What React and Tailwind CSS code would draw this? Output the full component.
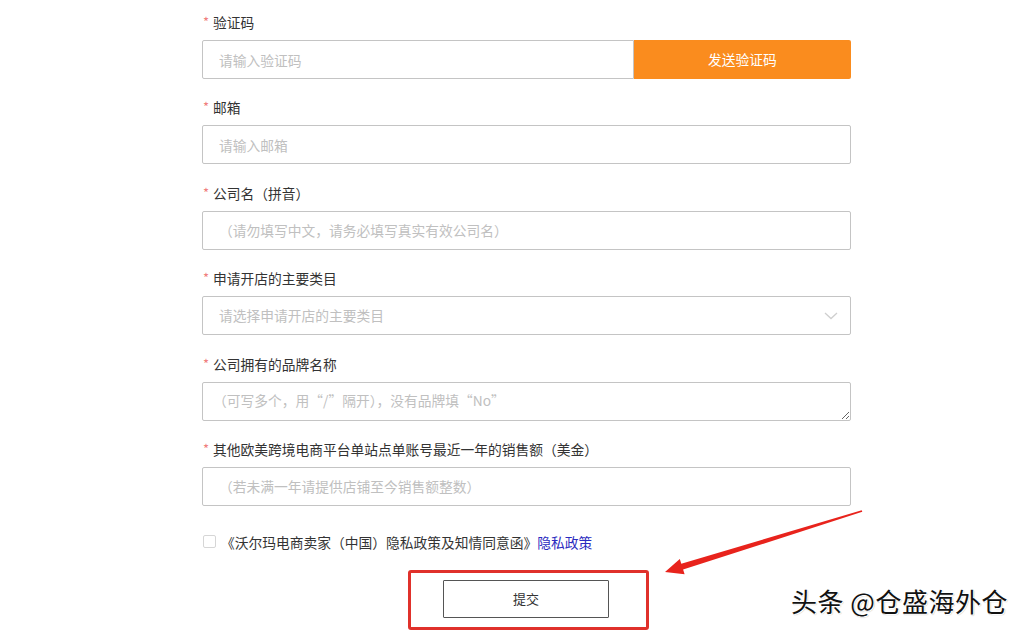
import React from "react"

const fieldFont = { fontFamily: '"Microsoft YaHei", "Noto Sans CJK SC", "Liberation Sans", sans-serif' }

function Label({ children }) {
    return (
        <div className="h-5 leading-5 text-[13.75px] text-[#333] mb-2 flex items-center">
            <span className="text-[#f07d7d] text-[13px] mr-[4px] ml-[1px]">*</span>
            <span>{children}</span>
        </div>
    )
}

function Field({ label, children }) {
    return (
        <div className="mb-[18.4px]">
            <Label>{label}</Label>
            {children}
        </div>
    )
}

const inputCls = "w-full h-[39px] border border-[#c4c4c4] rounded-[2px] pl-[16px] text-[13.75px] text-[#333] placeholder:text-[#c0c0c0] outline-none bg-white"

export default function App() {
    return (
        <div className="relative w-[1024px] h-[634px] bg-white overflow-hidden" style={fieldFont}>
            <div className="pl-[202px] pt-[12px] w-[851px]">
                <Field label="验证码">
                    <div className="flex">
                        <input placeholder="请输入验证码" className={inputCls + " flex-1 rounded-r-none"} style={fieldFont} />
                        <button className="w-[217px] h-[39px] bg-[#fa8c1e] text-white text-[13.75px] rounded-r-[2px]">发送验证码</button>
                    </div>
                </Field>
                <Field label="邮箱">
                    <input placeholder="请输入邮箱" className={inputCls} style={fieldFont} />
                </Field>
                <Field label="公司名（拼音）">
                    <input placeholder="（请勿填写中文，请务必填写真实有效公司名）" className={inputCls + " pl-[10px]"} style={fieldFont} />
                </Field>
                <Field label="申请开店的主要类目">
                    <div className="h-[39px] border border-[#c4c4c4] rounded-[2px] pl-[16px] pr-[12px] flex items-center justify-between">
                        <span className="text-[13.75px] text-[#c0c0c0]">请选择申请开店的主要类目</span>
                        <svg width="14" height="8" viewBox="0 0 14 8" fill="none">
                            <path d="M1 1l6 5.5L13 1" stroke="#cfcfcf" strokeWidth="1.3" />
                        </svg>
                    </div>
                </Field>
                <Field label="公司拥有的品牌名称">
                    <textarea placeholder="（可写多个，用“/”隔开），没有品牌填“No”" className="block w-full h-[39px] border border-[#c4c4c4] rounded-[2px] pl-[10px] pt-[7px] text-[13.75px] leading-5 placeholder:text-[#c0c0c0] outline-none resize-y" style={fieldFont} />
                </Field>
                <Field label="其他欧美跨境电商平台单站点单账号最近一年的销售额（美金）">
                    <input placeholder="（若未满一年请提供店铺至今销售额整数）" className={inputCls + " pl-[10px]"} style={fieldFont} />
                </Field>
                <div className="flex items-center h-5 mt-[26px] text-[13.75px] text-[#333]">
                    <span className="w-[13px] h-[13px] border border-[#d6d6d6] rounded-[2px] ml-[1px] mr-[5px]"></span>
                    <span>《沃尔玛电商卖家（中国）隐私政策及知情同意函》</span>
                    <span className="text-[#2b2bc0]">隐私政策</span>
                </div>
                <div className="flex pl-[206px] mt-[18px]">
                    <div className="w-[241px] h-[60px] border-[3px] border-[#e0312b] rounded-[3px] pl-[32px] pt-[7px]">
                        <button className="w-[166px] h-[38px] border border-[#555] rounded-[1px] text-[13px] text-[#333] bg-white">提交</button>
                    </div>
                </div>
            </div>

            <svg className="absolute left-0 top-0" width="1024" height="634" viewBox="0 0 1024 634">
                <polygon fill="#e8231c" points="665,572 684.6,574.3 683.1,569.6 862.3,511.8 861.7,510.2 681.3,563.8 679.8,559.1" />
            </svg>

            <div
                className="absolute left-[791px] top-[584px] text-[26px] leading-[33px] text-[#111] tracking-[0.5px]"
                style={{ ...fieldFont, textShadow: "1px 1px 0 #fff, -1px 0 0 #fff, 0 -1px 0 #fff, 1px 1px 1px #999" }}
            >
                头条 @仓盛海外仓
            </div>
        </div>
    )
}
